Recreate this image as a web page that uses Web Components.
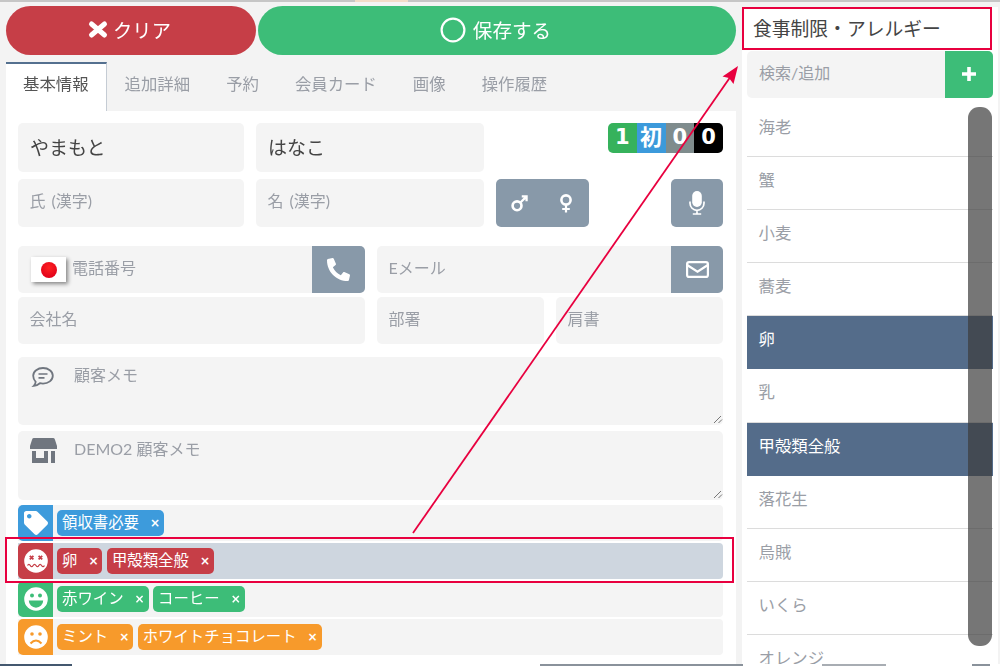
<!DOCTYPE html>
<html lang="ja">
<head>
<meta charset="utf-8">
<title>顧客情報</title>
<style>
html, body { margin: 0; padding: 0; }
body { width: 1000px; height: 666px; overflow: hidden; background: #f3f3f3; font-family: "Lato", "Noto Sans CJK JP", sans-serif; }
</style>
</head>
<body>
<crm-screen>
	<customer-panel slot="main"></customer-panel>
	<allergy-side slot="side"></allergy-side>
</crm-screen>

<script>
(function() {

function define(name, css, html, onConnect) {
	customElements.define(name, class extends HTMLElement {
		constructor() {
			super();
			this.attachShadow({mode: 'open'}).innerHTML = '<style>' + css + '</style>' + html;
		}
		connectedCallback() {
			if (onConnect) onConnect(this);
		}
	});
}

const ICONS = {
	times: '<svg viewBox="0 0 20 17"><path d="M3.5 3L16.5 14M16.5 3L3.5 14" stroke="#fff" stroke-width="5" stroke-linecap="round"/></svg>',
	ring: '<svg viewBox="0 0 26 26"><circle cx="13" cy="13" r="11.4" fill="none" stroke="#fff" stroke-width="2.2"/></svg>',
	plus: '<svg viewBox="0 0 16 16"><path d="M8 1v14M1 8h14" stroke="#fff" stroke-width="3.6"/></svg>',
	mars: '<svg viewBox="0 0 18 18"><circle cx="6.4" cy="11.4" r="4.7" fill="none" stroke="#fff" stroke-width="2.8"/><path d="M10 8L16 2M11.4 1.5h5.1v5.1" fill="none" stroke="#fff" stroke-width="2.4"/></svg>',
	venus: '<svg viewBox="0 0 14 19"><circle cx="7" cy="6" r="4.6" fill="none" stroke="#fff" stroke-width="2.6"/><path d="M7 10.5V18.6M3.2 15h7.6" fill="none" stroke="#fff" stroke-width="2.2"/></svg>',
	mic: '<svg viewBox="0 0 16 24"><rect x="3.2" y="0" width="9.6" height="16" rx="4.8" fill="#fff"/><path d="M1 10.5v1.8a7 7 0 0 0 14 0v-1.8M8 19.5v3M3.8 23h8.4" fill="none" stroke="#fff" stroke-width="1.7"/></svg>',
	phone: '<svg viewBox="0 0 512 512"><path fill="#fff" transform="translate(512 0) scale(-1 1)" d="M493.4 24.6l-104-24c-11.3-2.6-22.9 3.3-27.5 13.9l-48 112c-4.2 9.8-1.4 21.3 6.9 28l60.6 49.6c-36 76.7-98.9 140.5-177.2 177.2l-49.6-60.6c-6.8-8.3-18.2-11.1-28-6.9l-112 48C3.9 366.5-2 378.1.6 389.4l24 104C27.1 504.2 36.7 512 48 512c256.1 0 464-207.5 464-464 0-11.2-7.7-20.9-18.6-23.4z"/></svg>',
	mail: '<svg viewBox="0 0 23 17"><rect x="1.1" y="1.1" width="20.8" height="14.8" rx="2" fill="none" stroke="#fff" stroke-width="2.2"/><path d="M1.5 4.2L11.5 10.6L21.5 4.2" fill="none" stroke="#fff" stroke-width="2.2"/></svg>',
	comment: '<svg viewBox="0 0 22 20"><path d="M11 1c5.3 0 9.8 3.4 9.8 7.8s-4.5 7.8-9.8 7.8c-1.1 0-2.1-.1-3.1-.4-1.2 1-3 2.3-6.1 2.6 1-1 1.8-2.4 1.9-4C2.200 13.300 1.200 11.200 1.200 8.800 1.200 4.400 5.700 1 11 1z" fill="none" stroke="#70767f" stroke-width="1.8"/><path d="M6.500 7h9M6.500 10.800h6" stroke="#70767f" stroke-width="1.700"/></svg>',
	store: '<svg viewBox="0 0 27 25"><path fill="#70767f" d="M4 0h19a2 2 0 0 1 1.900 1.400L27 8v3H0V8l2.100-6.600A2 2 0 0 1 4 0z"/><path fill="#70767f" fill-rule="evenodd" d="M2 13h16v12H2zM6 13v7h8v-7z"/><path fill="#70767f" d="M21 13h4v12h-4z"/></svg>',
	tag: '<svg viewBox="0 0 512 512"><path fill="#fff" d="M0 252.118V48C0 21.49 21.49 0 48 0h204.118a48 48 0 0 1 33.941 14.059l211.882 211.882c18.745 18.745 18.745 49.137 0 67.882L293.823 497.941c-18.745 18.745-49.137 18.745-67.882 0L14.059 286.059A48 48 0 0 1 0 252.118zM112 64c-26.51 0-48 21.49-48 48s21.49 48 48 48 48-21.49 48-48-21.49-48-48-48z"/></svg>',
	dizzy: '<svg viewBox="0 0 24 24"><circle cx="12" cy="12" r="11.800" fill="#fff"/><path d="M5.800 6.800l3.600 3.600M9.400 6.800l-3.600 3.600M14.600 6.800l3.600 3.600M18.200 6.800l-3.600 3.600" stroke="var(--c)" stroke-width="1.800"/><path d="M3.500 16.500q1.400-2.400 2.800 0t2.800 0 2.900 0 2.800 0 2.800 0 2.800 0" fill="none" stroke="var(--c)" stroke-width="1.300"/></svg>',
	smile: '<svg viewBox="0 0 24 24"><circle cx="12" cy="12" r="11.800" fill="#fff"/><circle cx="8" cy="8.500" r="2" fill="var(--c)"/><circle cx="16" cy="8.500" r="2" fill="var(--c)"/><path d="M4.800 13.500h14.400a7.200 7.200 0 0 1-14.400 0z" fill="var(--c)"/></svg>',
	frown: '<svg viewBox="0 0 24 24"><circle cx="12" cy="12" r="11.800" fill="#fff"/><circle cx="8" cy="9" r="1.800" fill="var(--c)"/><circle cx="16" cy="9" r="1.800" fill="var(--c)"/><path d="M6.500 18.500q5.500-6 11 0" fill="none" stroke="var(--c)" stroke-width="2"/></svg>'
};

define('app-icon', `
	:host { display: inline-flex; flex: none; }
	svg { display: block; width: 100%; height: 100%; overflow: visible; }
`, '', function(el) {
	el.shadowRoot.innerHTML = el.shadowRoot.querySelector('style').outerHTML + ICONS[el.getAttribute('name')];
	el.style.width = el.getAttribute('w') + 'px';
	el.style.height = (el.getAttribute('h') || el.getAttribute('w')) + 'px';
});

define('crm-screen', `
	:host { display: flex; flex-direction: column; position: relative; width: 1000px; height: 666px; overflow: hidden; filter: blur(.35px); }
	.top { height: 2px; flex: none; background: linear-gradient(90deg, #c6c6c6 355px, #f2dcc8 355px, #f2dcc8 408px, #c6c6c6 408px); }
	.body { display: grid; grid-template-columns: 742px 256px 2px; height: 662px; flex: none; }
	.bottom { height: 2px; flex: none; background: linear-gradient(90deg, #44586f 72px, #fff 72px, #fff 540px, #8a929b 540px, #8a929b 743px, #fff 743px, #fff 822px, #a8adb3 822px, #a8adb3 886px, #fff 886px, #fff 972px, #8a929b 972px, #8a929b 990px, #fff 990px); }
`, `
	<div class="top"></div>
	<div class="body"><slot name="main"></slot><slot name="side"></slot></div>
	<div class="bottom"></div>
	<call-outs></call-outs>
`);

define('action-button', `
	:host { display: flex; align-items: center; justify-content: center; gap: 5px; height: 49px; border-radius: 25px; color: #fff; font-size: 19.300px; background: var(--bg); padding: 0 3px 2px 0; box-sizing: border-box; }
`, '<slot></slot>');

define('tab-item', `
	:host { display: block; padding: 0 18px; font-size: 16.400px; line-height: 44px; height: 49px; box-sizing: border-box; color: #9a9ea6; white-space: nowrap; }
	:host([active]) { background: #fff; color: #555; border-top: 2px solid #54708f; border-right: 1px solid #c5ccd4; line-height: 40px; padding: 0 17px; }
`, '<slot></slot>');

define('text-field', `
	:host { display: flex; align-items: center; background: #f4f4f4; border-radius: 5px; overflow: hidden; color: #9a9ea6; font-size: 16px; min-width: 0; word-spacing: 2px; }
	:host([big]) { font-size: 19px; color: #444; }
	.t { flex: 1; padding: 0 11.500px 6px; white-space: nowrap; }
	:host([big]) .t { padding: 0 12px 2px; }
	:host([flag]) .t { padding-left: 6px; padding-bottom: 5px; }
`, '<slot name="start"></slot><div class="t"><slot></slot></div><slot name="end"></slot>');

define('flag-jp', `
	:host { display: block; flex: none; width: 35px; height: 25px; margin: 0 0 1px 13px; background: #fff; box-shadow: 2px 2px 4px rgba(0,0,0,.45); position: relative; }
	i { display: block; position: absolute; left: 10px; top: 5px; width: 16px; height: 16px; border-radius: 50%; background: radial-gradient(circle at 50% 35%, #f22 0, #e0001a 80%); }
`, '<i></i>');

define('field-button', `
	:host { display: flex; align-items: center; justify-content: center; flex: none; align-self: stretch; width: var(--w, 53px); background: #8899a9; }
	:host([solo]) { border-radius: 5px; }
`, '<slot></slot>');

define('memo-field', `
	:host { display: flex; position: relative; background: #f4f4f4; border-radius: 5px; color: #9a9ea6; font-size: 16px; }
	.ic { width: 56px; flex: none; display: flex; padding: var(--ic-top, 10px) 0 0 var(--ic-left, 14px); box-sizing: border-box; }
	.t { line-height: 24px; padding-top: 6px; }
	svg { position: absolute; right: 0; bottom: 1px; width: 10px; height: 10px; }
`, `
	<div class="ic"><slot name="icon"></slot></div>
	<div class="t"><slot></slot></div>
	<svg viewBox="0 0 10 10"><path d="M1 9L8 2M5.500 9L9 5.500" stroke="#777" stroke-width="1" fill="none"/></svg>
`);

define('tag-chip', `
	:host { display: flex; align-items: center; height: 26px; padding-left: 5px; padding-right: 4px; border-radius: 5px; background: var(--c); color: #fff; font-size: 15.400px; white-space: nowrap; box-sizing: border-box; }
	span { padding-bottom: 4px; }
	b { width: 10px; margin-left: 11px; text-align: center; font-family: "DejaVu Sans", sans-serif; font-size: 12px; font-weight: 700; }
`, '<span><slot></slot></span><b>×</b>');

define('tag-row', `
	:host { display: flex; height: 36px; background: #f4f4f4; border-radius: 0 4px 4px 0; }
	:host([highlight]) { background: #ced6df; }
	.ic { width: 35px; flex: none; display: flex; align-items: center; justify-content: center; background: var(--c); border-radius: 5px 0 0 5px; }
	.tags { display: flex; align-items: center; gap: 4.500px; padding-left: 4px; }
`, '<div class="ic"><slot name="icon"></slot></div><div class="tags"><slot></slot></div>');

define('visit-badges', `
	:host { display: flex; justify-self: end; height: 30px; width: 115px; border-radius: 5px; overflow: hidden; color: #fff; font-family: "DejaVu Sans", "Noto Sans CJK JP", sans-serif; font-weight: 700; font-size: 21px; }
	span { flex: 1; text-align: center; line-height: 29px; }
`, '<span style="background:#36b25c">1</span><span style="background:#3c9adb;font-size:22px">初</span><span style="background:#7f8c8d">0</span><span style="background:#000">0</span>');

define('customer-panel', `
	:host { display: block; padding: 4px 6px 0; }
	.actions { display: grid; grid-template-columns: 250px 478px; gap: 2px; }
	.red { --bg: #c63e47; }
	.green { --bg: #3dbd78; gap: 7px; font-size: 19.600px; }
	.tabs { display: flex; margin-top: 7px; height: 49px; }
	.panel { background: #fff; padding: 12px 13px 0 12px; height: 553px; box-sizing: border-box; }
	.names { display: grid; grid-template-columns: 226px 228px 227px; grid-template-rows: 49px 48px; column-gap: 12px; row-gap: 7px; }
	.btns { display: flex; justify-content: space-between; }
	.contact { display: grid; grid-template-columns: 347px 346px; grid-template-rows: 47px 47px; column-gap: 12px; row-gap: 4px; margin-top: 19px; }
	.two { display: grid; grid-template-columns: 167px 167px; column-gap: 12px; }
	.gender { --w: 93px; justify-content: flex-start; gap: 31px; padding-left: 15px; box-sizing: border-box; }
	.mic, .mail { --w: 52px; }
	.memo1 { height: 68px; margin-top: 13px; }
	.memo2 { height: 69px; margin-top: 6px; --ic-top: 7px; --ic-left: 12px; }
	.rows { display: grid; row-gap: 2px; margin-top: 5px; }
`, `
	<div class="actions">
		<action-button class="red"><app-icon name="times" w="20" h="17"></app-icon>クリア</action-button>
		<action-button class="green"><app-icon name="ring" w="26"></app-icon>保存する</action-button>
	</div>
	<div class="tabs">
		<tab-item active>基本情報</tab-item>
		<tab-item>追加詳細</tab-item>
		<tab-item>予約</tab-item>
		<tab-item>会員カード</tab-item>
		<tab-item>画像</tab-item>
		<tab-item>操作履歴</tab-item>
	</div>
	<div class="panel">
		<div class="names">
			<text-field big>やまもと</text-field>
			<text-field big>はなこ</text-field>
			<visit-badges></visit-badges>
			<text-field>氏 (漢字)</text-field>
			<text-field>名 (漢字)</text-field>
			<div class="btns">
				<field-button solo class="gender"><app-icon name="mars" w="17"></app-icon><app-icon name="venus" w="14" h="19"></app-icon></field-button>
				<field-button solo class="mic"><app-icon name="mic" w="16" h="24"></app-icon></field-button>
			</div>
		</div>
		<div class="contact">
			<text-field flag><flag-jp slot="start"></flag-jp>電話番号<field-button slot="end"><app-icon name="phone" w="23"></app-icon></field-button></text-field>
			<text-field>Eメール<field-button slot="end" class="mail"><app-icon name="mail" w="23" h="17"></app-icon></field-button></text-field>
			<text-field>会社名</text-field>
			<div class="two"><text-field>部署</text-field><text-field>肩書</text-field></div>
		</div>
		<memo-field class="memo1"><app-icon slot="icon" name="comment" w="22" h="20"></app-icon>顧客メモ</memo-field>
		<memo-field class="memo2"><app-icon slot="icon" name="store" w="27" h="25"></app-icon>DEMO2 顧客メモ</memo-field>
		<div class="rows">
			<tag-row style="--c:#3d9bdc"><app-icon slot="icon" name="tag" w="24"></app-icon><tag-chip>領収書必要</tag-chip></tag-row>
			<tag-row highlight style="--c:#c63e47"><app-icon slot="icon" name="dizzy" w="24"></app-icon><tag-chip>卵</tag-chip><tag-chip>甲殻類全般</tag-chip></tag-row>
			<tag-row style="--c:#3dbd78"><app-icon slot="icon" name="smile" w="24"></app-icon><tag-chip>赤ワイン</tag-chip><tag-chip>コーヒー</tag-chip></tag-row>
			<tag-row style="--c:#f79a2b"><app-icon slot="icon" name="frown" w="24"></app-icon><tag-chip>ミント</tag-chip><tag-chip>ホワイトチョコレート</tag-chip></tag-row>
		</div>
	</div>
`);

define('side-item', `
	:host { display: block; height: 53.200px; box-sizing: border-box; padding: 11px 11.500px 0; line-height: 24px; font-size: 16.400px; color: #9a9ea6; border-bottom: 1px solid #dcdcdc; white-space: nowrap; }
	:host([selected]) { background: #546c8a; color: #fff; border-bottom-color: #546c8a; }
`, '<slot></slot>');

define('allergy-side', `
	:host { display: block; position: relative; margin-top: 5px; height: 657px; padding: 0 5px; background: #fff; overflow: hidden; }
	.title { height: 43px; line-height: 43px; margin-left: -5px; padding-left: 11px; font-size: 18.800px; color: #444; }
	.search { display: flex; height: 47px; margin-top: 1px; background: #f4f4f4; border-radius: 5px; overflow: hidden; color: #9a9ea6; font-size: 16px; }
	.search span { flex: 1; padding-left: 12px; line-height: 44px; }
	.search div { width: 48px; display: flex; align-items: center; justify-content: center; padding-bottom: 2px; box-sizing: border-box; background: #3dbd78; }
	.list { margin-top: 5.500px; }
	.scroll { position: absolute; left: 226px; top: 100px; width: 24px; height: 539px; border-radius: 11px; background: rgba(60,60,60,.7); }
`, `
	<div class="title">食事制限・アレルギー</div>
	<div class="search"><span>検索/追加</span><div><app-icon name="plus" w="16"></app-icon></div></div>
	<div class="list">
		<side-item>海老</side-item>
		<side-item>蟹</side-item>
		<side-item>小麦</side-item>
		<side-item>蕎麦</side-item>
		<side-item selected>卵</side-item>
		<side-item>乳</side-item>
		<side-item selected>甲殻類全般</side-item>
		<side-item>落花生</side-item>
		<side-item>烏賊</side-item>
		<side-item>いくら</side-item>
		<side-item>オレンジ</side-item>
	</div>
	<div class="scroll"></div>
`);

// the red annotation drawn on top of the screenshot
define('call-outs', `
	:host { display: block; position: absolute; left: 0; top: 0; width: 1000px; height: 666px; pointer-events: none; }
	svg { display: block; }
`, `
	<svg width="1000" height="666" viewBox="0 0 1000 666">
		<g fill="none" stroke="#e8003f" stroke-width="2">
			<rect x="743" y="8" width="248" height="41"/>
			<rect x="6" y="538" width="727" height="44"/>
			<path d="M413 533L731 76" stroke-width="1.800"/>
		</g>
		<path d="M738 66L733.500 84L729 78L722.500 76.500z" fill="#e8003f"/>
	</svg>
`);

})();
</script>
</body>
</html>
